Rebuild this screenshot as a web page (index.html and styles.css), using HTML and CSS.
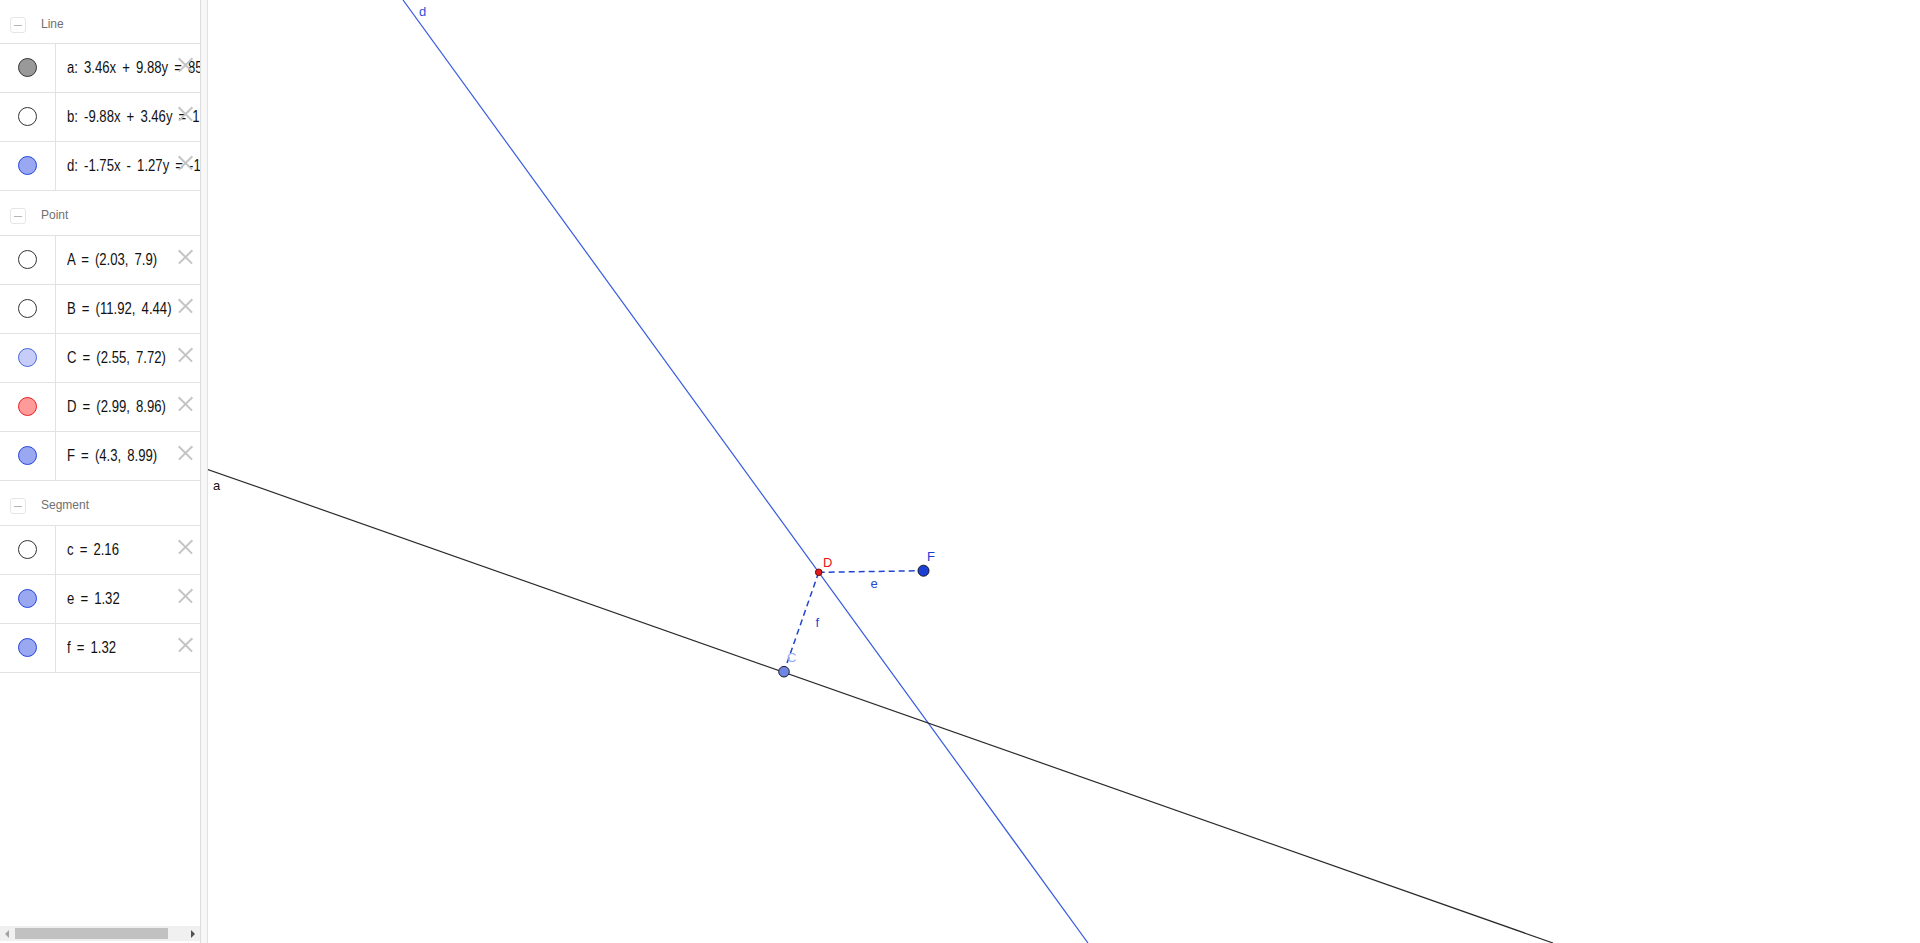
FILE: index.html
```html
<!DOCTYPE html>
<html>
<head>
<meta charset="utf-8">
<link rel="stylesheet" href="styles.css">
</head>
<body>
<div class="app">
  <div class="algebra">
    <div class="list">
      <div class="group first"><span class="toggle"><span class="dash"></span></span><span class="gname">Line</span></div>
      <div class="row"><div class="cell-marble"><span class="marble m-grey"></span></div><div class="cell-text"><span class="expr">a: 3.46x + 9.88y = 85.07</span></div><span class="del"></span></div>
      <div class="row"><div class="cell-marble"><span class="marble m-white"></span></div><div class="cell-text"><span class="expr">b: -9.88x + 3.46y = 1.52</span></div><span class="del"></span></div>
      <div class="row"><div class="cell-marble"><span class="marble m-blue"></span></div><div class="cell-text"><span class="expr">d: -1.75x - 1.27y = -16.61</span></div><span class="del"></span></div>
      <div class="group"><span class="toggle"><span class="dash"></span></span><span class="gname">Point</span></div>
      <div class="row"><div class="cell-marble"><span class="marble m-white"></span></div><div class="cell-text"><span class="expr">A = (2.03, 7.9)</span></div><span class="del"></span></div>
      <div class="row"><div class="cell-marble"><span class="marble m-white"></span></div><div class="cell-text"><span class="expr">B = (11.92, 4.44)</span></div><span class="del"></span></div>
      <div class="row"><div class="cell-marble"><span class="marble m-lightblue"></span></div><div class="cell-text"><span class="expr">C = (2.55, 7.72)</span></div><span class="del"></span></div>
      <div class="row"><div class="cell-marble"><span class="marble m-red"></span></div><div class="cell-text"><span class="expr">D = (2.99, 8.96)</span></div><span class="del"></span></div>
      <div class="row"><div class="cell-marble"><span class="marble m-blue"></span></div><div class="cell-text"><span class="expr">F = (4.3, 8.99)</span></div><span class="del"></span></div>
      <div class="group"><span class="toggle"><span class="dash"></span></span><span class="gname">Segment</span></div>
      <div class="row"><div class="cell-marble"><span class="marble m-white"></span></div><div class="cell-text"><span class="expr">c = 2.16</span></div><span class="del"></span></div>
      <div class="row"><div class="cell-marble"><span class="marble m-blue"></span></div><div class="cell-text"><span class="expr">e = 1.32</span></div><span class="del"></span></div>
      <div class="row"><div class="cell-marble"><span class="marble m-blue"></span></div><div class="cell-text"><span class="expr">f = 1.32</span></div><span class="del"></span></div>
    </div>
    <div class="hscroll">
      <span class="arrow-left"></span>
      <span class="thumb"></span>
      <span class="arrow-right"></span>
    </div>
  </div>
  <div class="splitter"></div>
  <div class="graphics">
    <svg class="canvas" viewBox="208 0 1712 943" width="1712" height="943" xmlns="http://www.w3.org/2000/svg">
      <line x1="403" y1="0" x2="1088" y2="943" stroke="#3559e0" stroke-width="1.2"/>
      <line x1="207.3" y1="469.3" x2="1553" y2="943" stroke="#2a2a2a" stroke-width="1.2"/>
      <line x1="818.7" y1="572.3" x2="923.3" y2="570.7" stroke="#1f45d2" stroke-width="1.5" stroke-dasharray="6 4"/>
      <line x1="818.7" y1="572.3" x2="784" y2="671.7" stroke="#1f45d2" stroke-width="1.5" stroke-dasharray="6 4"/>
      <circle cx="784" cy="671.7" r="5.3" fill="#6f86e2" stroke="#1e1e2e" stroke-width="1"/>
      <circle cx="923.5" cy="570.7" r="5.5" fill="#1a3fd2" stroke="#151530" stroke-width="1"/>
      <circle cx="818.7" cy="572.3" r="3.3" fill="#e41c1c" stroke="#6a0a0a" stroke-width="1"/>
      <text class="lbl" x="419" y="16" fill="#2e52dc">d</text>
      <text class="lbl" x="213" y="490" fill="#111">a</text>
      <text class="lbl" x="823" y="567" fill="#e81414">D</text>
      <text class="lbl" x="927" y="561" fill="#1a3fd2">F</text>
      <text class="lbl" x="870.5" y="588" fill="#2447d4">e</text>
      <text class="lbl" x="815.5" y="627" fill="#2447d4">f</text>
      <text class="lbl" x="787" y="662" fill="#9aabf2">C</text>
    </svg>
  </div>
</div>
</body>
</html>
```

FILE: styles.css
```css
html, body {
  margin: 0;
  padding: 0;
  background: #ffffff;
}

.app {
  display: flex;
  width: 1920px;
  height: 943px;
  overflow: hidden;
}

.algebra {
  width: 200px;
  flex: none;
  display: flex;
  flex-direction: column;
  border-right: 1px solid #dcdcdc;
  background: #ffffff;
}

.list {
  flex: 1;
  overflow: hidden;
}

.group {
  height: 45px;
  box-sizing: border-box;
  display: flex;
  align-items: flex-start;
  padding: 17px 0 0 10px;
  border-bottom: 1px solid #e2e2e2;
}

.group.first {
  height: 44px;
}

.toggle {
  width: 14px;
  height: 14px;
  border: 1px solid #e6e6e6;
  border-radius: 3px;
  display: flex;
  align-items: center;
  justify-content: center;
}

.dash {
  width: 8px;
  height: 1px;
  background: #b4b4b4;
}

.gname {
  margin-left: 15px;
  font-family: "Liberation Sans", Arial, sans-serif;
  font-size: 12px;
  line-height: 15px;
  color: #707070;
}

.row {
  position: relative;
  height: 49px;
  box-sizing: border-box;
  display: flex;
  border-bottom: 1px solid #e2e2e2;
}

.cell-marble {
  width: 56px;
  flex: none;
  border-right: 1px solid #e2e2e2;
  display: flex;
  align-items: center;
  justify-content: center;
  padding-bottom: 2px;
  box-sizing: border-box;
}

.marble {
  width: 17px;
  height: 17px;
  border-radius: 50%;
  border: 1px solid #333;
  box-sizing: content-box;
}

.m-grey { background: #999999; border-color: #333333; }
.m-white { background: #ffffff; border-color: #333333; }
.m-blue { background: #99a8f0; border-color: #2244dd; }
.m-lightblue { background: #c6cdf8; border-color: #4a66e0; }
.m-red { background: #ff9a9a; border-color: #e82020; }

.cell-text {
  flex: 1;
  min-width: 0;
  overflow: hidden;
  white-space: nowrap;
  display: flex;
  align-items: center;
  padding-left: 11px;
}

.expr {
  display: inline-block;
  font-family: "Liberation Sans", Arial, sans-serif;
  font-size: 16px;
  word-spacing: 3px;
  color: #111111;
  transform: scaleX(0.82);
  transform-origin: 0 50%;
}

.del {
  position: absolute;
  right: 7px;
  top: 13px;
  width: 15px;
  height: 15px;
}

.del::before,
.del::after {
  content: "";
  position: absolute;
  left: -2px;
  top: 6.5px;
  width: 19px;
  height: 1.6px;
  background: #c4c4c4;
  transform: rotate(45deg);
}

.del::after {
  transform: rotate(-45deg);
}

.hscroll {
  height: 15px;
  margin-bottom: 2px;
  background: #f0f0f0;
  position: relative;
  flex: none;
}

.thumb {
  position: absolute;
  left: 15px;
  top: 2px;
  width: 153px;
  height: 11px;
  background: #c1c1c1;
}

.arrow-left {
  position: absolute;
  left: 5px;
  top: 4px;
  width: 0;
  height: 0;
  border-top: 4px solid transparent;
  border-bottom: 4px solid transparent;
  border-right: 4px solid #a3a3a3;
}

.arrow-right {
  position: absolute;
  right: 5px;
  top: 4px;
  width: 0;
  height: 0;
  border-top: 4px solid transparent;
  border-bottom: 4px solid transparent;
  border-left: 4px solid #505050;
}

.splitter {
  width: 6px;
  flex: none;
  background: #f7f7f7;
  border-right: 1px solid #e2e2e2;
}

.graphics {
  flex: 1;
  position: relative;
  overflow: hidden;
  background: #ffffff;
}

.canvas {
  display: block;
}

.lbl {
  font-family: "Liberation Sans", Arial, sans-serif;
  font-size: 13px;
}
```
